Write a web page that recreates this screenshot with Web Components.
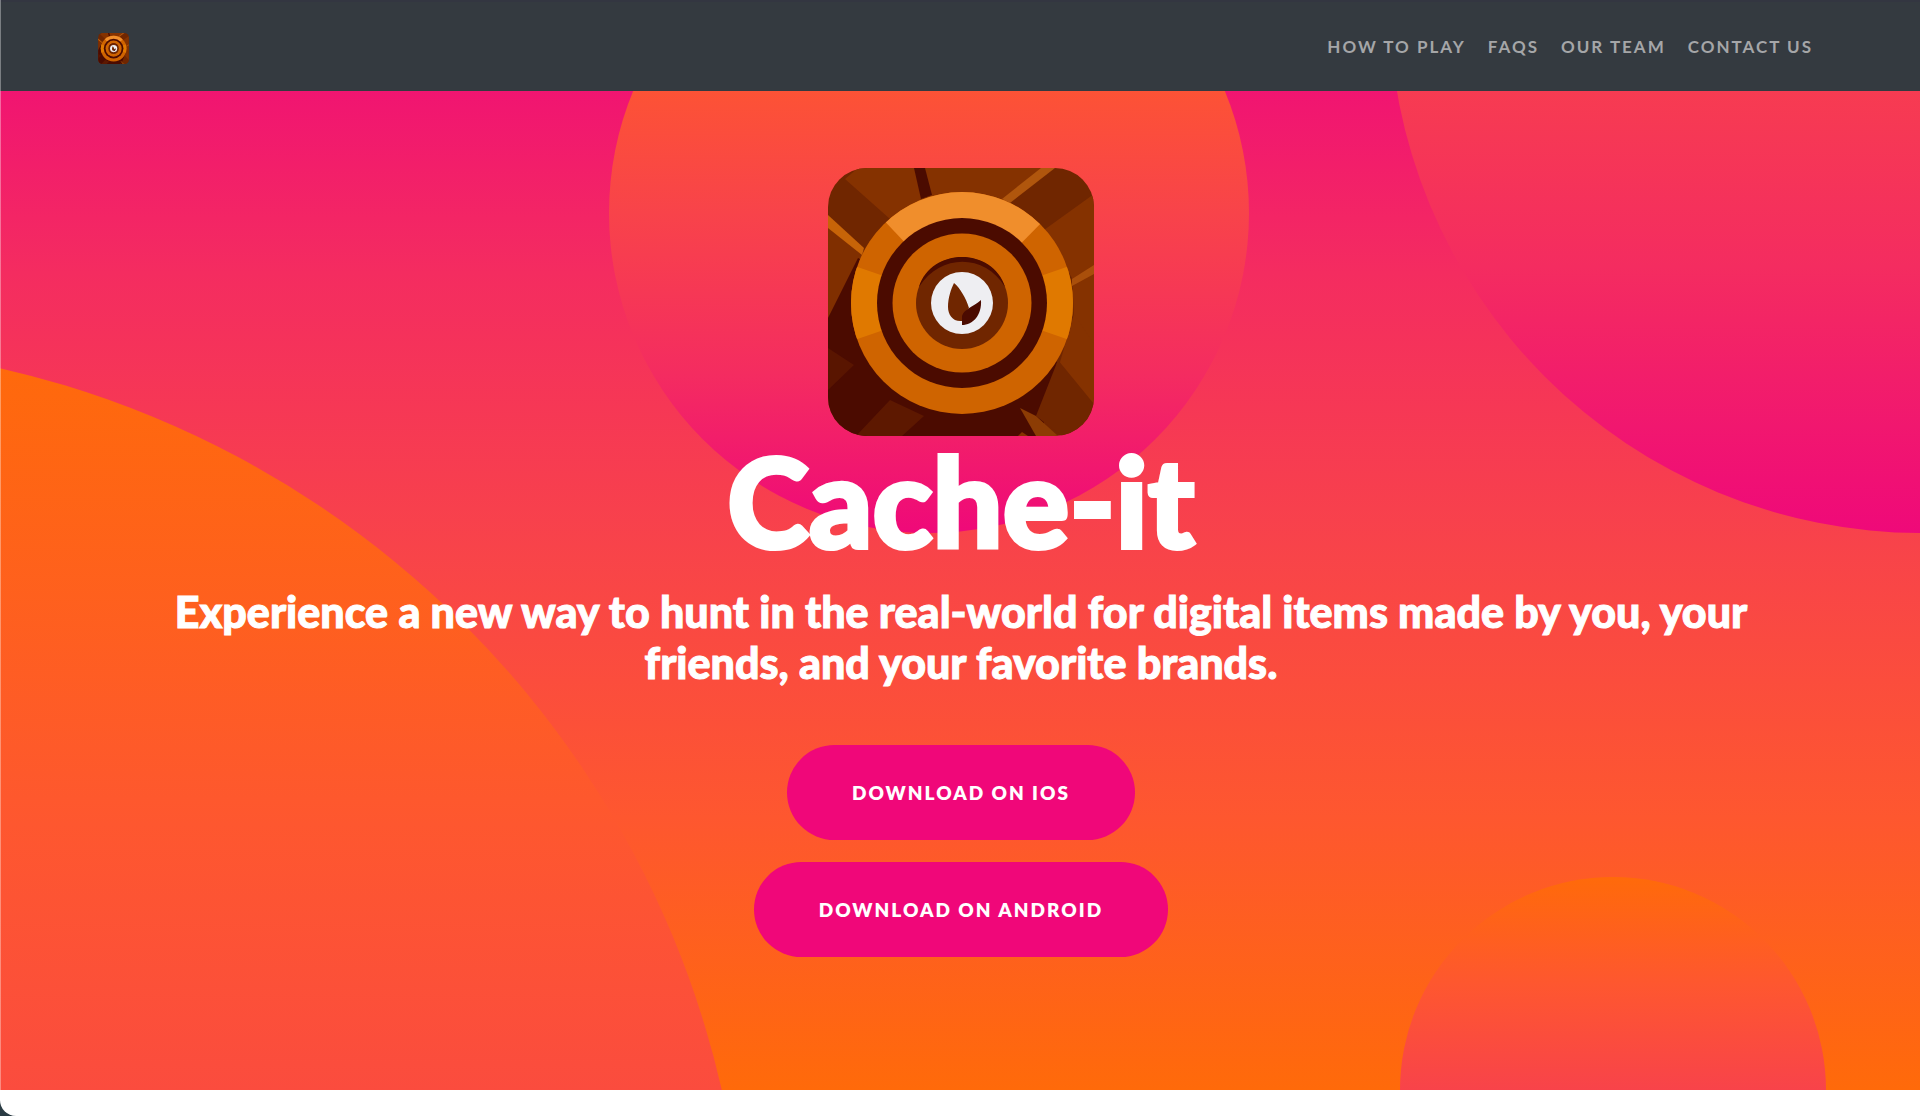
<!DOCTYPE html>
<html lang="en">
<head>
<meta charset="utf-8">
<title>Cache-it</title>
<meta name="viewport" content="width=device-width, initial-scale=1">
<style>
html{background:#2b3c44}
body{margin:0;min-height:100vh;background:#fff;border-bottom-left-radius:16px;overflow:hidden;font-family:Lato,"Liberation Sans",sans-serif;color:#fff}
</style>
</head>
<body>
<cache-page></cache-page>
<script>
const define=(name,html)=>{
  const t=document.createElement('template');
  t.innerHTML=html;
  customElements.define(name,class extends HTMLElement{
    constructor(){super();this.attachShadow({mode:'open'}).append(t.content.cloneNode(true));}
  });
};

define('cache-logo',`
<style>:host{display:block}svg{display:block;width:100%;height:100%}</style>
<svg viewBox="0 0 266 268" role="img" aria-label="Cache-it logo">
  <defs><clipPath id="r"><rect width="266" height="268" rx="39"/></clipPath>
  <clipPath id="ring"><circle cx="134" cy="135" r="111"/></clipPath></defs>
  <g clip-path="url(#r)">
    <rect width="266" height="268" fill="#702600"/>
    <path d="M17 11L30 0H226L178 35L62 51Z" fill="#853200"/>
    <path d="M0 50L40 86L0 150Z" fill="#802f00"/>
    <path d="M216 62L266 26V178L246 148L244 110Z" fill="#853200"/>
    <path d="M246 146L266 176V236L228 208Z" fill="#853200"/>
    <path d="M30 90L0 150V268H213L229 194Z" fill="#4b0b00"/>
    <path d="M0 180L26 197L0 222Z" fill="#591500"/>
    <path d="M28 268L62 232L96 248L74 268Z" fill="#5d1800"/>
    <path d="M230 192L208 248L234 268H266V236Z" fill="#702600"/>
    <path d="M192 240L208 248L230 268H208Z" fill="#8c3c04"/>
    <path d="M190 268L194 264L200 268Z" fill="#853200"/>
    <path d="M0 47L36 80L34 87L0 60Z" fill="#c76408"/>
    <path d="M86 0H97L104 27L93 31Z" fill="#4b0b00"/>
    <path d="M174 31L213 0H227L182 35Z" fill="#b0560d"/>
    <path d="M244 111L266 97V106L244 118Z" fill="#a94f0b"/>
    <circle cx="134" cy="135" r="111" fill="#cf6400"/>
    <g clip-path="url(#ring)">
      <path d="M134 135L48 44V0H222V46Z" fill="#f08e2c"/>
      <path d="M134 135L18 95V175ZM134 135L250 95V175Z" fill="#e07900"/>
    </g>
    <circle cx="134" cy="135" r="85" fill="#4b0b00"/>
    <circle cx="134" cy="135" r="69.500" fill="#cf6400"/>
    <circle cx="134" cy="135" r="46" fill="#702600"/>
    <path d="M91 119C103 79 165 79 177 119C157 86 113 85 91 119Z" fill="#4b0b00"/>
    <circle cx="134" cy="135" r="31" fill="#eeeef2"/>
    <path d="M126 115C132 120 138 130 141 140C138 144 134 147 134 153C125 154 120 147 120 139C120 130 123 121 126 115Z" fill="#702600"/>
    <path d="M153 132C154 147 145 157 134 157V148C136 141 145 139 153 132Z" fill="#4b0b00"/>
  </g>
</svg>`);

define('nav-link',`
<style>
:host{display:block}
a{display:block;padding:11px;color:#a5a6a8;font-size:17px;line-height:26px;font-weight:700;letter-spacing:2px;text-transform:uppercase;text-decoration:none;white-space:nowrap}
</style><a href="#"><slot></slot></a>`);

define('site-nav',`
<style>
:host{display:block;position:relative;z-index:1;background:#343a40;border-top:2px solid #333641;box-sizing:border-box}
.in{width:90%;margin:auto;display:flex;align-items:center;justify-content:space-between;padding:21px 0 20px}
nav{display:flex}
.brand{display:block}
cache-logo{width:31px;height:31px;margin:2px 0 0 2px}
</style>
<div class="in"><a class="brand" href="#" aria-label="Cache-it home"><cache-logo></cache-logo></a><nav><slot></slot></nav></div>`);

define('pill-link',`
<style>
:host{display:block}
a{display:block;box-sizing:border-box;padding:32px 65px;border-radius:48px;background:#f00779;color:#fff;font-size:19px;line-height:31px;font-weight:800;letter-spacing:2px;text-transform:uppercase;text-decoration:none}
</style><a href="#"><slot></slot></a>`);

define('site-hero',`
<style>
:host{--warm:#ff6a0a;--q1:#fe572f;--mid:#f8434a;--q3:#f42c60;--pink:#ef0979;
display:block;position:relative;overflow:hidden;margin:-91px -2px 0 0;padding:168px 0 133px;background:linear-gradient(0deg,var(--warm),var(--q1),var(--mid),var(--q3),var(--pink))}
.c{position:absolute;border-radius:50%;background:linear-gradient(0deg,var(--pink),var(--q3),var(--mid),var(--q1),var(--warm))}
.c1{width:1920px;height:1920px;bottom:-1174px;left:-1174px}
.c2{width:1066px;height:1066px;top:-533px;right:-533px}
.c3{width:426px;height:426px;bottom:-213px;right:5%}
.c4{width:640px;height:640px;top:-107px;right:35%}
.in{position:relative;width:90%;margin:auto;display:flex;flex-direction:column;align-items:center;text-align:center}
cache-logo{width:266px;height:268px}
h1{margin:0;font-size:124px;line-height:128px;font-weight:900;-webkit-text-stroke:4px #fff}
h2{margin:22px 0 0;padding:0 32px;font-size:43px;line-height:51px;font-weight:900;-webkit-text-stroke:1px #fff}
.b{display:flex;flex-direction:column;align-items:center;gap:22px;margin-top:57px}
</style>
<div class="c c1"></div><div class="c c2"></div><div class="c c3"></div><div class="c c4"></div>
<div class="in"><cache-logo></cache-logo>
<h1><slot name="title"></slot></h1>
<h2><slot name="tagline"></slot></h2>
<div class="b"><slot></slot></div></div>`);

define('cache-page',`
<style>
:host{display:block;position:relative}
.edge{position:absolute;z-index:2;left:0;top:0;bottom:0;width:1px;background:rgba(255,255,255,.35)}
</style>
<site-nav><nav-link>How to Play</nav-link><nav-link>FAQs</nav-link><nav-link>Our Team</nav-link><nav-link>Contact Us</nav-link></site-nav>
<site-hero><span slot="title">Cache-it</span><span slot="tagline">Experience a new way to hunt in the real-world for digital items made by you, your friends, and your favorite brands.</span><pill-link>Download on iOS</pill-link><pill-link>Download on Android</pill-link></site-hero>
<div class="edge"></div>`);
</script>
</body>
</html>
